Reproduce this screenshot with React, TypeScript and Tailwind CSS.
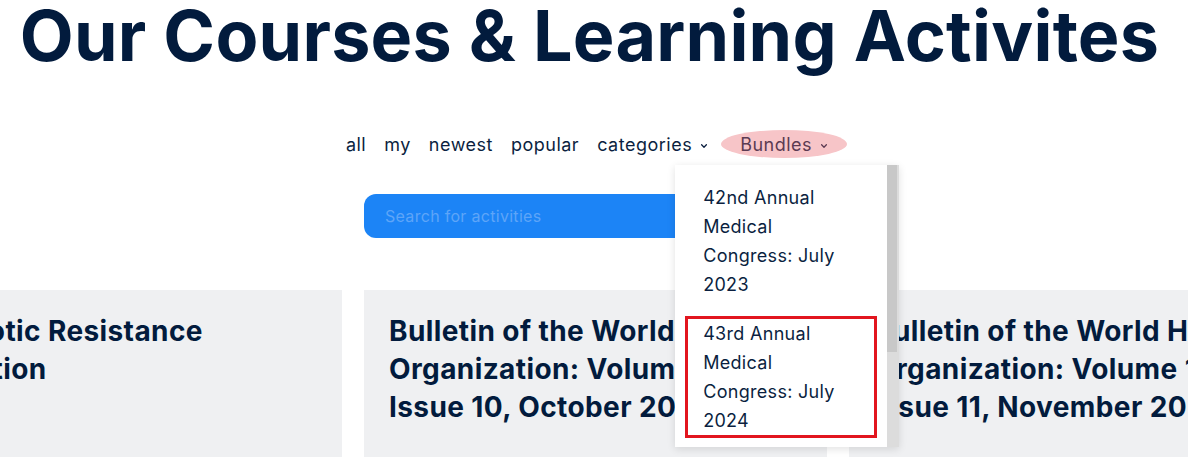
import React from 'react';

// Nav tabs across the top of the list
const tabs = ['all', 'my', 'newest', 'popular'];

// Bundle entries in the open dropdown
const bundles = [
	{ id: 42, label: '42nd Annual Medical Congress: July 2023', active: false },
	{ id: 43, label: '43rd Annual Medical Congress: July 2024', active: true }
];

// Carousel cards (first one is scrolled partly off the left edge)
const courses = [
	'Antibiotic Resistance Collection',
	'Bulletin of the World Health Organization: Volume 101, Issue 10, October 2023',
	'Bulletin of the World Health Organization: Volume 101, Issue 11, November 2023'
];

function Chevron() {
	return (
		<svg className="w-[8px] h-[8px] ml-[8px] mt-[3px]" viewBox="0 0 10 10" fill="none" stroke="currentColor" strokeWidth="1.6">
			<path strokeLinecap="round" strokeLinejoin="round" d="M2 3.5l3 3 3-3" />
		</svg>
	);
}

function BundlesMenu() {
	return (
		<div className="absolute left-[-46px] top-[35px] w-[224px] h-[282px] bg-white shadow-[0_2px_8px_rgba(0,0,0,0.12)] overflow-hidden z-20 tracking-[0.3px]">
			<ul className="pl-[10px] pr-[22px] pt-[15px]">
				{bundles.map((b) => (
					<li
						key={b.id}
						className={`border-[3px] pl-[15px] pr-[21px] mb-[14px] text-[18px] leading-[29px] text-[#0b1f3f] ${b.active ? 'border-[#e2161f]' : 'border-transparent'}`}
					>
						{b.label}
					</li>
				))}
			</ul>
			{/* scrollbar */}
			<div className="absolute right-0 top-0 bottom-0 w-[12px] bg-[#dcdcdc]">
				<div className="h-[187px] w-[10px] bg-[#c8c8c8]"></div>
			</div>
		</div>
	);
}

export default function App() {
	return (
		<div className="w-[1188px] h-[457px] overflow-hidden bg-white font-['Inter',sans-serif] text-[#0b1f3f]">
			<h1 className="text-center text-[70px] leading-[70px] font-bold tracking-[0.25px] pt-[1px] pr-[9px] text-[#021b3d]">
				Our Courses &amp; Learning Activites
			</h1>

			<nav className="flex justify-center items-center gap-[18px] mt-[59px] pl-[5px] text-[18px] tracking-[0.5px] text-[#0b1f3f]">
				{tabs.map((t) => (
					<span key={t}>{t}</span>
				))}
				<span className="flex items-center">
					categories
					<Chevron />
				</span>
				<span className="relative -ml-[5px]">
					<span className="flex items-center h-[28px] px-[19px] rounded-[50%] bg-[#f7c5c8] text-[#5b3b52]">
						Bundles
						<Chevron />
					</span>
					<BundlesMenu />
				</span>
			</nav>

			<div className="flex justify-center mt-[36px]">
				<div className="w-[460px] h-[44px] rounded-[12px] bg-[#1c84f6] flex items-center px-[21px] text-[16px] tracking-[0.3px] text-[#5ea5f8]">
					Search for activities
				</div>
			</div>

			<div className="flex gap-[22px] mt-[52px] -ml-[121px]">
				{courses.map((c, i) => (
					<div key={i} className="shrink-0 w-[463px] h-[200px] bg-[#eff0f2] pl-[25px] pr-[49px] pt-[22px]">
						<h3 className="text-[28px] leading-[38px] font-bold tracking-[0.4px] text-[#021b3d]">{c}</h3>
					</div>
				))}
			</div>
		</div>
	);
}
